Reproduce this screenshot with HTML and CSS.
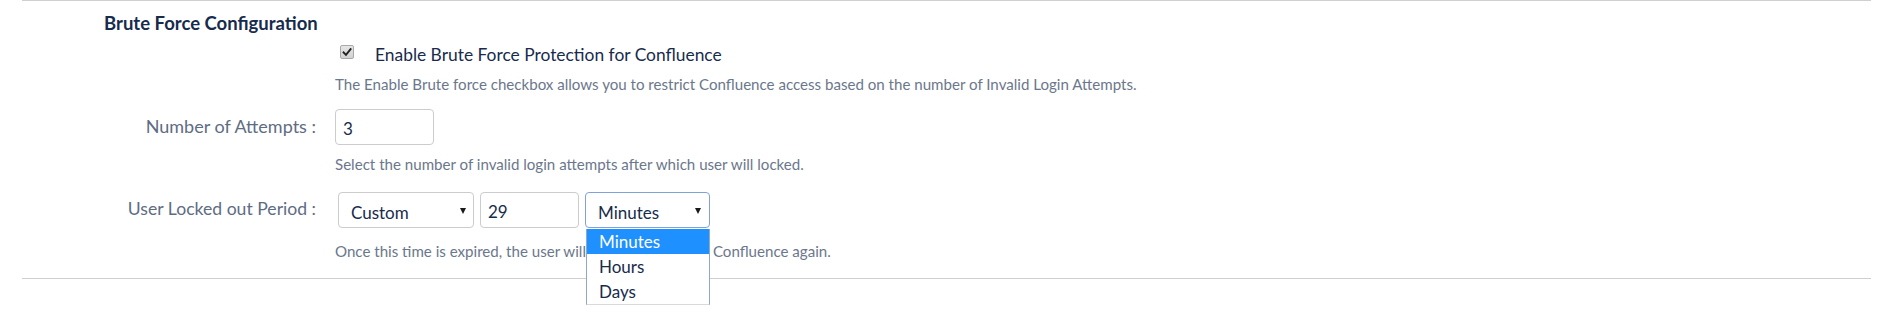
FILE: index.html
```html
<!DOCTYPE html>
<html lang="en">
<head>
<meta charset="utf-8">
<title>Brute Force Configuration</title>
<link rel="stylesheet" href="styles.css">
</head>
<body>
<section class="panel">
  <h2 class="title">Brute Force Configuration</h2>

  <label class="check-row">
    <span class="checkbox" aria-checked="true" role="checkbox">
      <svg viewBox="0 0 14 14" width="14" height="14" aria-hidden="true">
        <path d="M3.6 7.4 L6 9.8 L10.6 4.2" fill="none" stroke="#222" stroke-width="1.9" stroke-linecap="square"/>
      </svg>
    </span>
    <span class="check-label">Enable Brute Force Protection for Confluence</span>
  </label>
  <p class="help first-help">The Enable Brute force checkbox allows you to restrict Confluence access based on the number of Invalid Login Attempts.</p>

  <div class="field-row">
    <label class="field-label" for="attempts">Number of Attempts :</label>
    <input class="text-input" id="attempts" type="text" value="3">
  </div>
  <p class="help">Select the number of invalid login attempts after which user will locked.</p>

  <div class="field-row period-row">
    <span class="field-label">User Locked out Period :</span>
    <div class="controls">
      <div class="select select-custom">
        <span class="select-text">Custom</span>
        <span class="caret"></span>
      </div>
      <input class="text-input" type="text" value="29">
      <div class="select select-unit is-open">
        <span class="select-text">Minutes</span>
        <span class="caret"></span>
        <ul class="dropdown">
          <li class="option selected">Minutes</li>
          <li class="option">Hours</li>
          <li class="option">Days</li>
        </ul>
      </div>
    </div>
  </div>
  <p class="help last-help">Once this time is expired, the user will be able to login to Confluence again.</p>
</section>
</body>
</html>
```

FILE: styles.css
```css
html, body {
  margin: 0;
  padding: 0;
  background: #ffffff;
}

body {
  min-height: 317px;
  font-family: Lato, "Open Sans", sans-serif;
  color: #172b4d;
}

.panel {
  margin: 0 24px 0 22px;
  border-top: 1px solid #cfcfcf;
  border-bottom: 1px solid #cfcfcf;
  padding: 11px 0 18px 0;
}

.title {
  margin: 0 0 0 82px;
  font-size: 18.5px;
  line-height: 22px;
  font-weight: 700;
  color: #172b4d;
}

.check-row {
  display: flex;
  align-items: flex-start;
  margin: 10px 0 0 318px;
}

.checkbox {
  display: block;
  width: 14px;
  height: 14px;
  box-sizing: border-box;
  margin-top: 1px;
  border: 1px solid #a9a9a9;
  border-radius: 2px;
  background: linear-gradient(#e6e6e6, #d2d2d2);
  position: relative;
}

.checkbox svg {
  position: absolute;
  left: -1px;
  top: -1px;
}

.check-label {
  margin-left: 21px;
  font-size: 17.4px;
  line-height: 22px;
  color: #172b4d;
}

.help {
  margin: 10px 0 0 313px;
  font-size: 15.1px;
  line-height: 18px;
  color: #6b778c;
}

.first-help {
  margin-top: 9px;
}

.last-help {
  margin-top: 14px;
}

.field-row {
  display: flex;
  align-items: center;
  margin-top: 16px;
}

.period-row {
  margin-top: 19px;
}

.field-label {
  width: 294px;
  flex: none;
  text-align: right;
  font-size: 18px;
  line-height: 20px;
  padding-bottom: 2px;
  color: #5e6c84;
  margin-right: 19px;
}

.period-row .field-label {
  font-size: 17.6px;
}

.text-input {
  box-sizing: border-box;
  width: 99px;
  height: 36px;
  margin: 0;
  padding: 3px 7px 0 7px;
  border: 1px solid #cccccc;
  border-radius: 4px;
  font-family: inherit;
  font-size: 17px;
  color: #172b4d;
  background: #fff;
  outline: none;
}

.controls {
  display: flex;
  align-items: flex-start;
  gap: 6px;
  margin-left: 3px;
}

.select {
  position: relative;
  box-sizing: border-box;
  height: 36px;
  display: flex;
  align-items: flex-start;
  justify-content: space-between;
  border: 1px solid #cccccc;
  border-radius: 4px;
  background: #fff;
  padding: 0 7px 0 12px;
}

.select-custom {
  width: 136px;
}

.select-unit {
  width: 125px;
  border-color: #7fa3d8;
  padding-right: 8px;
}

.select-text {
  margin-top: 6px;
  font-size: 17px;
  line-height: 28px;
  color: #172b4d;
}

.caret {
  margin-top: 15px;
  width: 0;
  height: 0;
  border-left: 3.5px solid transparent;
  border-right: 3.5px solid transparent;
  border-top: 6px solid #1a1a1a;
}

.dropdown {
  position: absolute;
  top: 36px;
  left: 0;
  width: 122px;
  margin: 0;
  padding: 0;
  list-style: none;
  background: #fff;
  border-left: 1px solid #8ea8cc;
  border-right: 1px solid #8ea8cc;
  border-bottom: 1px solid #d9d9d9;
  z-index: 2;
}

.option {
  height: 25px;
  line-height: 25px;
  padding-left: 12px;
  font-size: 17px;
  color: #172b4d;
}

.option.selected {
  background: #1e90ff;
  color: #ffffff;
}
```
